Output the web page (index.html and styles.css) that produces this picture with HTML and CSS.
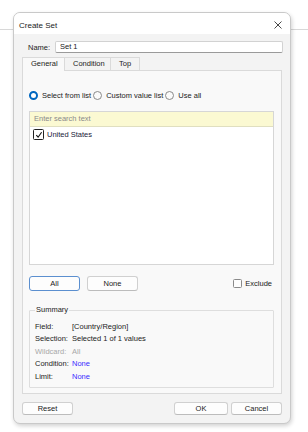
FILE: index.html
```html
<!DOCTYPE html>
<html>
<head>
<meta charset="utf-8">
<link rel="stylesheet" href="styles.css">
</head>
<body>
<div class="window">
  <div class="titlebar">
    <span class="title">Create Set</span>
    <svg class="close" width="8" height="8" viewBox="0 0 8 8"><path d="M0.5 0.5L7.5 7.5M7.5 0.5L0.5 7.5" stroke="#333" stroke-width="0.9" fill="none"/></svg>
  </div>
  <div class="body">
    <div class="name-row">
      <span class="name-label">Name:</span>
      <div class="name-input">Set 1</div>
    </div>
    <div class="tabs">
      <div class="tab active">General</div>
      <div class="tab">Condition</div>
      <div class="tab">Top</div>
    </div>
    <div class="panel">
      <div class="radio-row">
        <span class="radio checked"></span><span class="rlabel">Select from list</span>
        <span class="radio"></span><span class="rlabel">Custom value list</span>
        <span class="radio"></span><span class="rlabel">Use all</span>
      </div>
      <div class="listbox">
        <div class="search">Enter search text</div>
        <div class="item">
          <span class="check"><svg width="8" height="8" viewBox="0 0 8 8"><path d="M1.3 4.2L3.1 6.2L6.6 1.2" stroke="#111" stroke-width="1.1" fill="none"/></svg></span>
          <span>United States</span>
        </div>
      </div>
      <div class="btn-row">
        <div class="btn primary">All</div>
        <div class="btn">None</div>
        <div class="spacer"></div>
        <span class="box"></span><span class="exclude">Exclude</span>
      </div>
      <fieldset class="summary">
        <legend>Summary</legend>
        <div class="srow"><span class="sk">Field:</span><span class="sv">[Country/Region]</span></div>
        <div class="srow"><span class="sk">Selection:</span><span class="sv">Selected 1 of 1 values</span></div>
        <div class="srow muted"><span class="sk">Wildcard:</span><span class="sv">All</span></div>
        <div class="srow"><span class="sk">Condition:</span><span class="sv blue">None</span></div>
        <div class="srow"><span class="sk">Limit:</span><span class="sv blue">None</span></div>
      </fieldset>
    </div>
    <div class="footer">
      <div class="btn fbtn">Reset</div>
      <div class="spacer"></div>
      <div class="btn fbtn ok">OK</div>
      <div class="btn fbtn">Cancel</div>
    </div>
  </div>
</div>
</body>
</html>
```
FILE: styles.css
```css
* { box-sizing: border-box; }
html, body { margin: 0; padding: 0; }
body {
  width: 308px;
  height: 432px;
  background: #ffffff linear-gradient(#d8d8d8, #d8d8d8) 0 29px / 100% 1px no-repeat;
  font-family: "Liberation Sans", Arial, sans-serif;
  font-size: 7.5px;
  color: #1a1a1a;
  padding: 12px 0 0 13px;
}
.window {
  width: 278px;
  height: 412px;
  border: 1px solid #c9c9c9;
  border-radius: 7px;
  background: #f3f3f3;
  overflow: hidden;
  display: flex;
  flex-direction: column;
  box-shadow: 1px 2px 4px rgba(0,0,0,0.18);
}
.titlebar {
  height: 21px;
  flex: none;
  background: #ffffff;
  display: flex;
  align-items: center;
  padding: 3px 8px 0 5px;
}
.title { font-size: 8px; color: #1a1a1a; flex: 1; }
.close { display: block; }
.body {
  flex: 1;
  display: flex;
  flex-direction: column;
  padding: 7px 8px 8px 8px;
}
.name-row {
  height: 12px;
  display: flex;
  align-items: center;
}
.name-label { width: 33px; padding-left: 6px; color: #222; }
.name-input {
  flex: 1;
  height: 12px;
  margin-right: -1px;
  background: #fff;
  border: 1px solid #d2d2d2;
  border-bottom-color: #9a9a9a;
  border-radius: 2px;
  padding: 0 4px;
  line-height: 10px;
}
.tabs {
  margin-top: 4px;
  height: 13px;
  display: flex;
  position: relative;
  z-index: 1;
}
.tab {
  height: 13px;
  line-height: 12px;
  padding: 0 8px;
  border: 1px solid #dadada;
  border-bottom: none;
  margin-right: -1px;
  text-align: center;
  color: #222;
}
.tab:nth-child(1) { width: 43px; }
.tab:nth-child(2) { width: 47px; }
.tab:nth-child(3) { width: 30px; }
.tab.active { background: #f9f9f9; height: 14px; margin-bottom: -1px; }
.panel {
  height: 324px;
  flex: none;
  background: #f9f9f9;
  border: 1px solid #dadada;
  padding: 0 7px 0 6px;
  display: flex;
  flex-direction: column;
}
.radio-row {
  margin-top: 19px;
  height: 10px;
  display: flex;
  align-items: center;
}
.radio {
  width: 9px;
  height: 9px;
  border-radius: 50%;
  border: 1px solid #8a8a8a;
  background: #fbfbfb;
  flex: none;
  margin-right: 4px;
}
.radio.checked {
  border: 2.5px solid #0067c0;
  background: #fff;
}
.rlabel { margin-right: 2px; color: #222; }
.listbox {
  margin-top: 11px;
  height: 154px;
  background: #fff;
  border: 1px solid #d6d6d6;
}
.search {
  height: 15px;
  background: #fbf9d2;
  border-bottom: 1px solid #e0dfc0;
  color: #8a8a8a;
  line-height: 14px;
  padding-left: 4px;
}
.item {
  display: flex;
  align-items: center;
  height: 13px;
  margin-top: 1px;
  padding-left: 3px;
  color: #1a1a3a;
}
.check {
  width: 11px;
  height: 11px;
  border: 1px solid #222;
  border-radius: 1.5px;
  display: flex;
  align-items: center;
  justify-content: center;
  margin-right: 3px;
  background: #fff;
}
.check svg { display: block; }
.btn-row {
  margin-top: 11px;
  height: 15px;
  display: flex;
  align-items: center;
}
.btn {
  width: 51px;
  height: 15px;
  background: #fdfdfd;
  border: 1px solid #d0d0d0;
  border-bottom-color: #bcbcbc;
  border-radius: 3px;
  text-align: center;
  line-height: 13px;
  color: #1a1a1a;
  margin-right: 7px;
}
.btn.primary { border-color: #5b8fcf; }
.spacer { flex: 1; }
.box {
  width: 9px;
  height: 9px;
  border: 1px solid #8a8a8a;
  border-radius: 1.5px;
  background: #fdfdfd;
  margin-right: 3px;
}
.exclude { margin-right: 2px; color: #222; }
.summary {
  margin: 14px 0 0 0;
  padding: 6px 6px 2px 5px;
  border: 1px solid #dedede;
  border-radius: 1px;
  min-width: 0;
  height: 83px;
}
.summary legend {
  padding: 0 1px;
  margin-left: 0;
  color: #222;
  line-height: 10px;
}
.srow {
  display: flex;
  height: 12.4px;
  line-height: 12.4px;
  color: #222;
}
.sk { width: 37px; flex: none; }
.muted { color: #a8a8a8; }
.blue { color: #3a2bff; }
.footer {
  margin-top: 8px;
  height: 13px;
  display: flex;
}
.fbtn {
  height: 13px;
  line-height: 11px;
  margin-right: 0;
}
.ok { width: 54px; margin-right: 3px; }
```
